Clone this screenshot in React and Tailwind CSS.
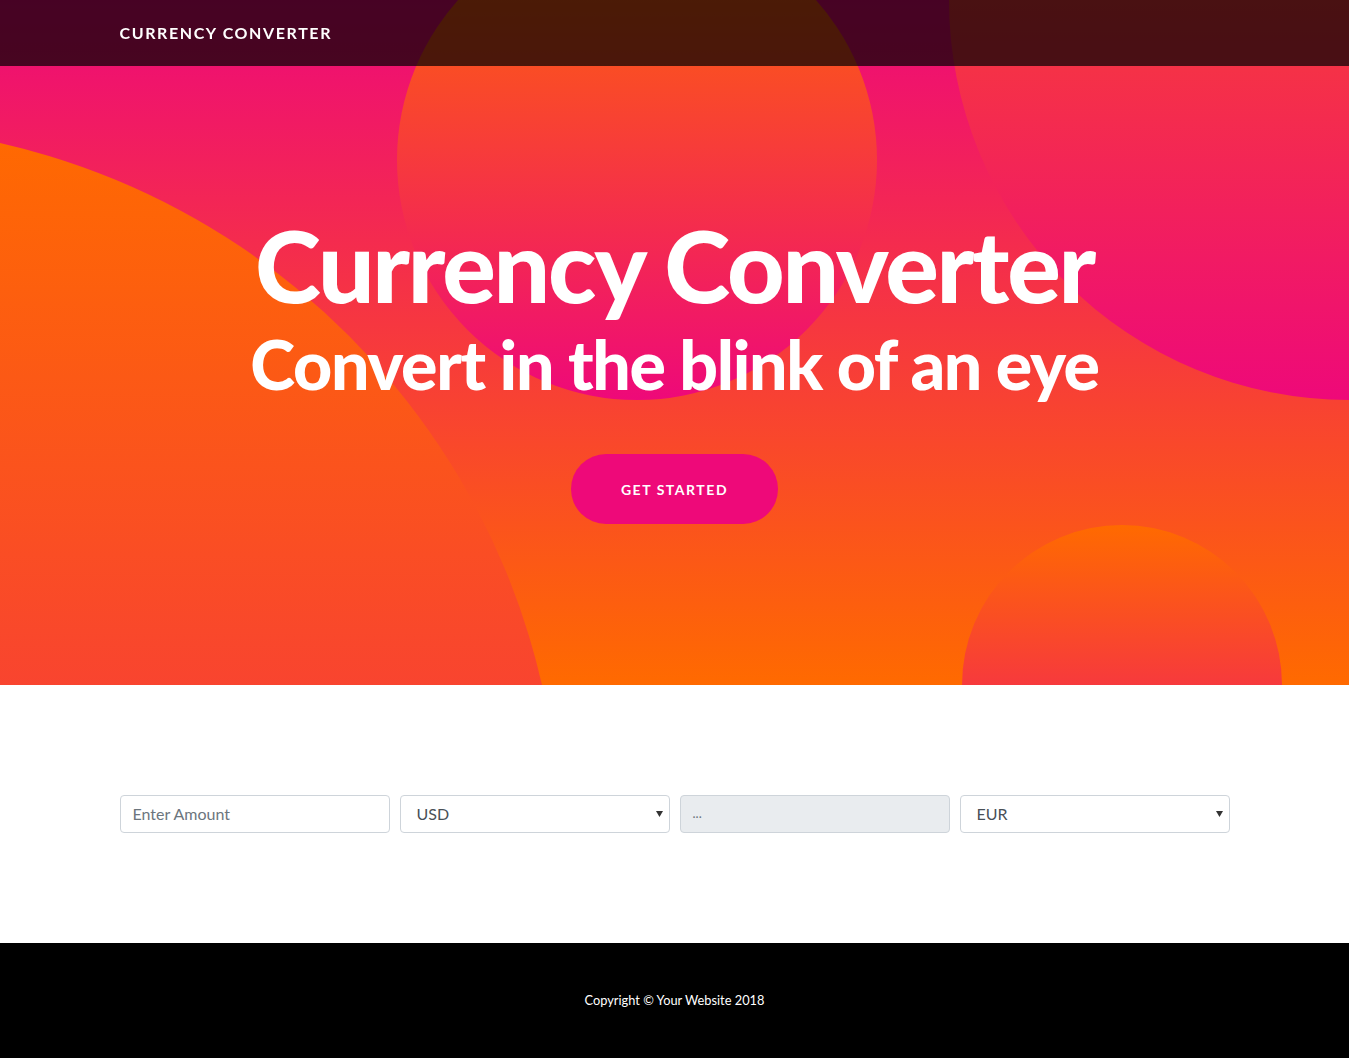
import React from "react";

function Select({ value }) {
  return (
    <div className="relative h-[38px] w-full rounded-[4px] border border-[#ced4da] bg-white">
      <div className="flex h-full items-center pl-[16px] text-[16px] text-[#495057]">{value}</div>
      <svg className="absolute right-[6px] top-[15px]" width="7" height="6" viewBox="0 0 7 6">
        <path d="M0 0 L7 0 L3.5 6 Z" fill="#333" />
      </svg>
    </div>
  );
}

export default function App() {
  return (
    <div className="min-h-screen bg-white font-['Lato','Liberation_Sans',sans-serif]">
      <nav className="fixed inset-x-0 top-0 z-20 h-[66px] bg-black/70">
        <div className="mx-auto flex h-full w-[1140px] items-center px-[15px]">
          <span className="text-[16px] font-bold uppercase tracking-[0.1rem] text-white">Currency Converter</span>
        </div>
      </nav>

      <header className="relative h-[685px] overflow-hidden bg-[linear-gradient(0deg,#ff6a00_0%,#ee0979_100%)] text-center text-white">
        <div className="absolute bottom-[-55rem] left-[-55rem] z-0 h-[90rem] w-[90rem] rounded-full bg-[linear-gradient(0deg,#ee0979_0%,#ff6a00_100%)]" />
        <div className="absolute right-[-25rem] top-[-25rem] z-0 h-[50rem] w-[50rem] rounded-full bg-[linear-gradient(0deg,#ee0979_0%,#ff6a00_100%)]" />
        <div className="absolute bottom-[-10rem] right-[5%] z-0 h-[20rem] w-[20rem] rounded-full bg-[linear-gradient(0deg,#ee0979_0%,#ff6a00_100%)]" />
        <div className="absolute right-[35%] top-[-5rem] z-0 h-[30rem] w-[30rem] rounded-full bg-[linear-gradient(0deg,#ee0979_0%,#ff6a00_100%)]" />

        <div className="relative z-10 flex flex-col items-center pt-[214px]">
          <h1 className="m-0 font-['Lato',sans-serif] text-[100px] font-black leading-[1] tracking-[-0.022em]">Currency Converter</h1>
          <h2 className="m-0 mt-[16px] font-['Lato',sans-serif] text-[68px] font-black leading-[1] tracking-[-0.02em]">Convert in the blink of an eye</h2>
          <button className="mt-[56px] flex h-[70px] w-[207px] items-center justify-center rounded-full bg-[#ee0979] text-[14px] font-bold uppercase tracking-[0.11em] text-white">
            Get Started
          </button>
        </div>
      </header>

      <section className="bg-white py-[110px]">
        <div className="mx-auto grid w-[1110px] grid-cols-4 gap-[10px]">
          <div className="flex h-[38px] items-center rounded-[4px] border border-[#ced4da] bg-white pl-[12px] text-[16px] text-[#6c757d]">
            Enter Amount
          </div>
          <Select value="USD" />
          <div className="flex h-[38px] items-center rounded-[4px] border border-[#ced4da] bg-[#e9ecef] pl-[12px] text-[13px] text-[#6c757d]">
            ...
          </div>
          <Select value="EUR" />
        </div>
      </section>

      <footer className="bg-black py-[48px]">
        <p className="m-0 text-center text-[12.8px] leading-[19px] text-white">Copyright © Your Website 2018</p>
      </footer>
    </div>
  );
}
